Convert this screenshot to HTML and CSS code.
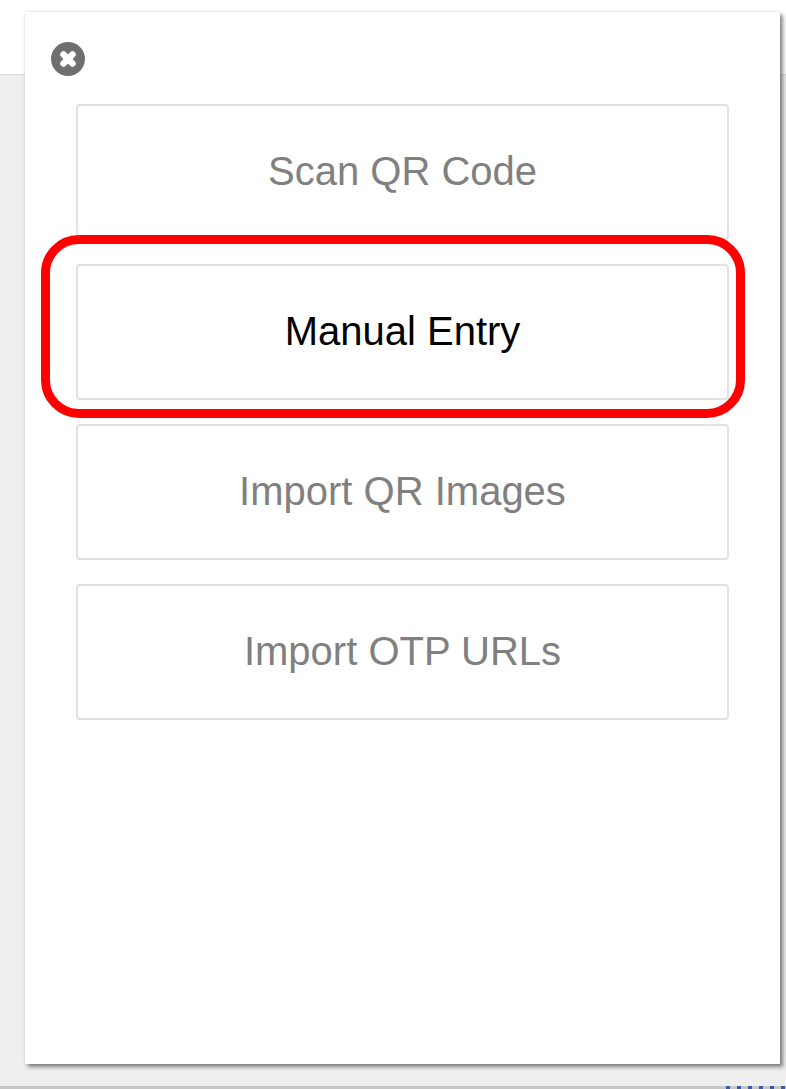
FILE: index.html
```html
<!DOCTYPE html>
<html lang="en">
<head>
<meta charset="utf-8">
<title>Add account</title>
<link rel="stylesheet" href="styles.css">
</head>
<body>
<div class="page">
  <div class="topbar"></div>
  <div class="backdrop"></div>
  <div class="footer"><span class="footer-link"></span></div>
</div>
<div class="panel">
  <button class="close" aria-label="Close">
    <svg viewBox="0 0 34 34" width="34" height="34">
      <circle cx="17" cy="17" r="17" fill="#6f6f6f"/>
      <path d="M12.5 12.5 L21.5 21.5 M21.5 12.5 L12.5 21.5" stroke="#fff" stroke-width="6.5" stroke-linecap="round"/>
    </svg>
  </button>
  <div class="menu">
    <div class="item">Scan QR Code</div>
    <div class="item item-active">Manual Entry</div>
    <div class="item">Import QR Images</div>
    <div class="item">Import OTP URLs</div>
  </div>
</div>
<div class="highlight"></div>
</body>
</html>
```
FILE: styles.css
```css
* { box-sizing: border-box; }
html, body { margin: 0; height: 100%; overflow: hidden; background: #fff; }
body { font-family: "Liberation Sans", Arial, sans-serif; }
.page { display: flex; flex-direction: column; height: 1089px; }
.topbar { height: 75px; background: #fff; border-bottom: 1px solid #dedede; }
.backdrop { flex: 1; background: #eeeeee; }
.footer { height: 3px; background: #c6c6c6; display: flex; justify-content: flex-end; }
.footer-link {
  width: 60px;
  height: 3px;
  background: repeating-linear-gradient(90deg, #3a5aa8 0 4px, #c6c6c6 4px 11px);
}
.panel {
  position: absolute;
  left: 25px;
  top: 12px;
  width: 755px;
  height: 1052px;
  background: #fff;
  padding: 30px 51px 0 25px;
  box-shadow: 3px 3px 4px rgba(0,0,0,.45), 0 0 3px rgba(0,0,0,.14);
}
.close { display: block; width: 34px; height: 34px; margin-left: 1px; padding: 0; border: 0; background: none; }
.close svg { display: block; }
.menu { display: flex; flex-direction: column; gap: 24px; margin: 28px 0 0 26px; }
.item {
  height: 136px;
  display: flex;
  align-items: center;
  justify-content: center;
  padding-bottom: 2px;
  border: 2px solid #e2e2e2;
  border-radius: 4px;
  background: #fff;
  color: #808080;
  font-size: 40px;
}
.item-active { color: #000; }
.highlight {
  position: absolute;
  left: 41px;
  top: 235px;
  width: 704px;
  height: 183px;
  border: 9px solid #ff0000;
  border-radius: 38px;
}
```
